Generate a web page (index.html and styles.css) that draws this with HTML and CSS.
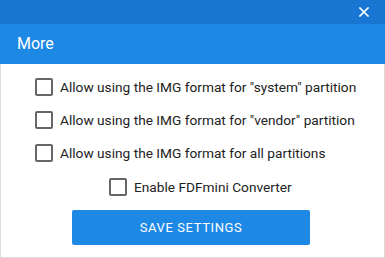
FILE: index.html
```html
<!DOCTYPE html>
<html lang="en">
<head>
    <meta charset="UTF-8">
    <title>More</title>
    <link rel="stylesheet" href="styles.css">
</head>
<body>
    <div class="window">
        <div class="titlebar">
            <button class="close" title="Close">
                <svg width="10" height="10" viewBox="0 0 10 10"><path d="M1 1L9 9M9 1L1 9" stroke="#fff" stroke-width="1.6" stroke-linecap="square"/></svg>
            </button>
        </div>
        <div class="header">More</div>
        <div class="content">
            <label class="option"><input type="checkbox"><span class="box"></span>Allow using the IMG format for "system" partition</label>
            <label class="option"><input type="checkbox"><span class="box"></span>Allow using the IMG format for "vendor" partition</label>
            <label class="option"><input type="checkbox"><span class="box"></span>Allow using the IMG format for all partitions</label>
            <label class="option center"><input type="checkbox"><span class="box"></span>Enable FDFmini Converter</label>
            <button class="save">SAVE SETTINGS</button>
        </div>
    </div>
</body>
</html>
```

FILE: styles.css
```css
body {
    margin: 0;
    font-family: Roboto, "Liberation Sans", Arial, sans-serif;
    background-color: #fff;
}
.window {
    width: 385px;
    height: 258px;
    display: flex;
    flex-direction: column;
}
.titlebar {
    height: 24px;
    background-color: #1976d2;
    display: flex;
    justify-content: flex-end;
    align-items: center;
}
.close {
    width: 30px;
    height: 24px;
    border: none;
    background: none;
    padding: 0;
    margin-right: 6px;
    display: flex;
    align-items: center;
    justify-content: center;
}
.header {
    height: 40px;
    background-color: #1e88e5;
    color: #fff;
    font-size: 16px;
    line-height: 40px;
    padding-left: 17px;
}
.content {
    flex: 1;
    border: 1px solid #ddd;
    border-top: none;
    display: flex;
    flex-direction: column;
    padding: 6px 0 0 34px;
}
.option {
    display: flex;
    align-items: center;
    height: 33px;
    font-size: 13.7px;
    color: #222;
}
.option input {
    display: none;
}
.box {
    width: 14px;
    height: 14px;
    border: 2px solid #666;
    border-radius: 2px;
    margin-right: 7px;
}
.option.center {
    margin-left: 74px;
    margin-top: 1px;
}
.save {
    align-self: flex-start;
    margin: 7px 0 0 37px;
    width: 238px;
    height: 35px;
    background-color: #1e88e5;
    color: #fff;
    border: none;
    border-radius: 2px;
    font-family: Roboto, "Liberation Sans", Arial, sans-serif;
    font-size: 13px;
    letter-spacing: 0.6px;
}
```
